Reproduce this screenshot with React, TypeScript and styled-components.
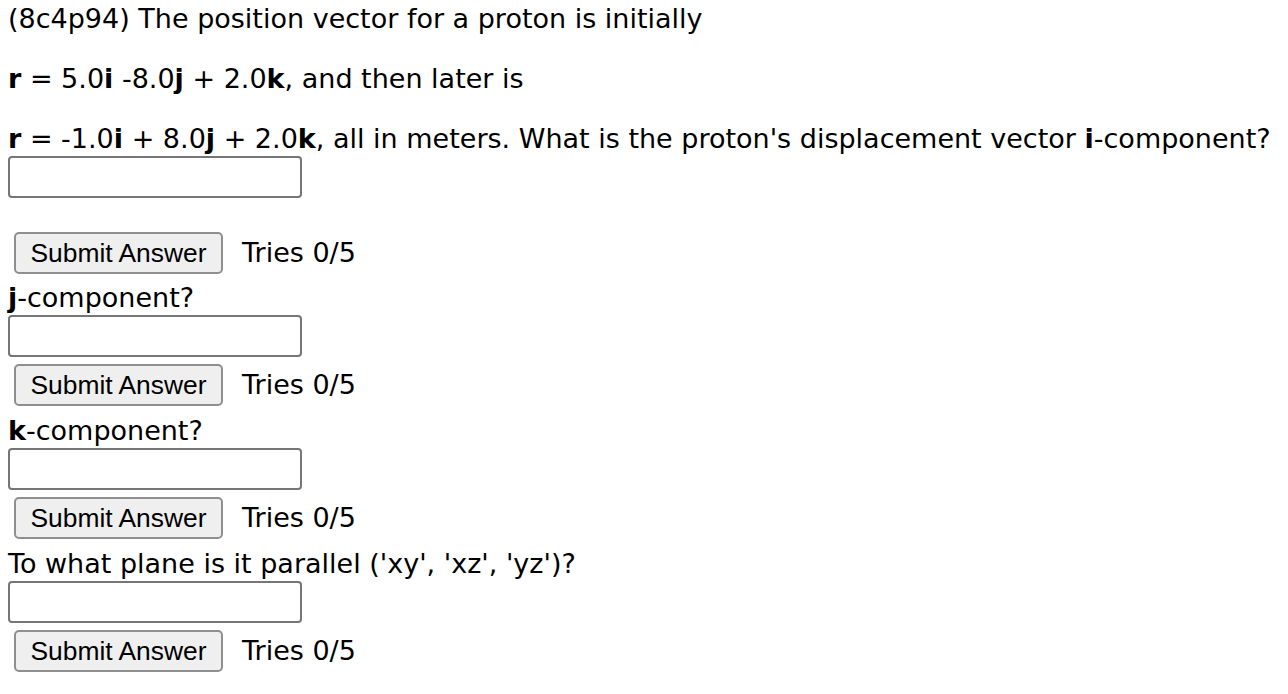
import React from "react";
import styled, { createGlobalStyle } from "styled-components";

const Global = createGlobalStyle`
  html, body { margin: 0; padding: 0; background: #fff; }
  body { font-family: "DejaVu Sans", Verdana, sans-serif; color: #000; }
`;

const Page = styled.div`
  padding: 0 8px;
  font-size: 27px;
  line-height: 30px;
`;

const Line = styled.div<{ $gap?: number }>`
  margin-top: ${(p) => p.$gap ?? 0}px;
  white-space: nowrap;
`;

const Field = styled.input`
  display: block;
  box-sizing: border-box;
  width: 294px;
  height: 42px;
  margin: 2px 0 0 0;
  border: 2px solid #767676;
  border-radius: 4px;
  background: #fff;
  font-size: 26px;
  padding: 2px 4px;
`;

const Row = styled.div<{ $gap: number }>`
  display: flex;
  align-items: center;
  margin-top: ${(p) => p.$gap}px;
  padding-left: 6px;
`;

const Button = styled.button`
  box-sizing: border-box;
  width: 209px;
  height: 42px;
  border: 2px solid #8f8f8f;
  border-radius: 5px;
  background: #efefef;
  font-family: "Liberation Sans", Arial, sans-serif;
  font-size: 26.4px;
  color: #000;
  padding: 0 4px;
  margin: 0;
`;

const Tries = styled.span`
  margin-left: 19px;
`;

type QProps = { label?: React.ReactNode; buttonGap: number; labelGap?: number };

const Question = ({ label, buttonGap, labelGap }: QProps) => (
  <>
    {label && <Line $gap={labelGap}>{label}</Line>}
    <Field type="text" />
    <Row $gap={buttonGap}>
      <Button>Submit Answer</Button>
      <Tries>Tries 0/5</Tries>
    </Row>
  </>
);

export default function App() {
  return (
    <Page>
      <Global />
      <Line $gap={4}>(8c4p94) The position vector for a proton is initially</Line>
      <Line $gap={30}>
        <b>r</b> = 5.0<b>i</b> -8.0<b>j</b> + 2.0<b>k</b>, and then later is
      </Line>
      <Line $gap={30}>
        <b>r</b> = -1.0<b>i</b> + 8.0<b>j</b> + 2.0<b>k</b>, all in meters. What is the
        proton's displacement vector <b>i</b>-component?
      </Line>
      <Question buttonGap={34} />
      <Question
        label={
          <>
            <b>j</b>-component?
          </>
        }
        labelGap={9}
        buttonGap={7}
      />
      <Question
        label={
          <>
            <b>k</b>-component?
          </>
        }
        labelGap={10}
        buttonGap={7}
      />
      <Question label="To what plane is it parallel ('xy', 'xz', 'yz')?" labelGap={10} buttonGap={7} />
    </Page>
  );
}
